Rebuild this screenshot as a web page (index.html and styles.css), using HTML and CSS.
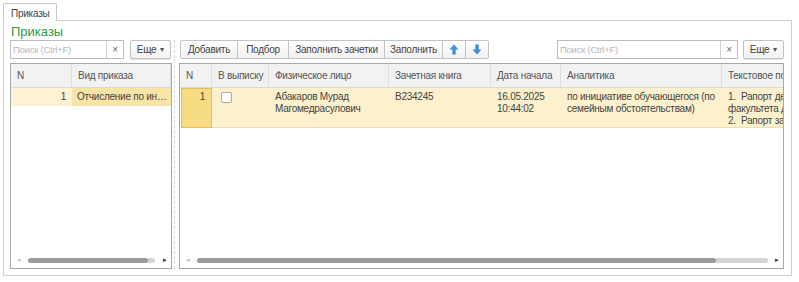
FILE: index.html
```html
<!DOCTYPE html>
<html lang="ru">
<head>
<meta charset="utf-8">
<title>Приказы</title>
<link rel="stylesheet" href="styles.css">
</head>
<body>
<div class="tabs"><div class="tab">Приказы</div></div>
<div class="panel">
  <div class="title">Приказы</div>
  <div class="content">
    <div class="pane pane-left">
      <div class="toolbar">
        <div class="search search-left"><span class="ph">Поиск (Ctrl+F)</span><span class="clear">×</span></div>
        <div class="btn more">Еще <span class="caret">▾</span></div>
      </div>
      <div class="table">
        <div class="grid grid-left">
          <div class="th">N</div><div class="th">Вид приказа</div>
          <div class="td num row1">1</div><div class="td cur row1 ell">Отчисление по инициативе обучающегося</div>
        </div>
        <div class="spacer"></div>
        <div class="hscroll">
          <span class="arr">◂</span>
          <div class="track"><div class="thumb" style="width:120px"></div><div class="rest" style="width:7px"></div></div>
          <span class="arr dark">▸</span>
        </div>
      </div>
    </div>
    <div class="split"></div>
    <div class="pane pane-right">
      <div class="toolbar">
        <div class="btngroup">
          <div class="btn g">Добавить</div><div class="btn g">Подбор</div><div class="btn g">Заполнить зачетки</div><div class="btn g">Заполнить</div>
          <div class="btn g icon"><svg width="10" height="11" viewBox="0 0 10 11"><path d="M5 0.5 L9.5 5.5 H6.7 V10.5 H3.3 V5.5 H0.5 Z" fill="#3f8fd8"/></svg></div>
          <div class="btn g icon"><svg width="10" height="11" viewBox="0 0 10 11"><path d="M5 10.5 L9.5 5.5 H6.7 V0.5 H3.3 V5.5 H0.5 Z" fill="#3f8fd8"/></svg></div>
        </div>
        <div class="grow"></div>
        <div class="search search-right"><span class="ph">Поиск (Ctrl+F)</span><span class="clear">×</span></div>
        <div class="btn more">Еще <span class="caret">▾</span></div>
      </div>
      <div class="table">
        <div class="grid grid-right">
          <div class="th">N</div><div class="th">В выписку</div><div class="th">Физическое лицо</div><div class="th">Зачетная книга</div><div class="th">Дата начала</div><div class="th">Аналитика</div><div class="th nowrap">Текстовое поле</div>
          <div class="td num sel">1</div>
          <div class="td row2"><span class="check"></span></div>
          <div class="td row2">Абакаров Мурад Магомедрасулович</div>
          <div class="td row2">В234245</div>
          <div class="td row2">16.05.2025<br>10:44:02</div>
          <div class="td row2">по инициативе обучающегося (по семейным обстоятельствам)</div>
          <div class="td row2 nowrap">1.&nbsp; Рапорт декана<br>факультета д...<br>2.&nbsp; Рапорт заместителя</div>
        </div>
        <div class="spacer"></div>
        <div class="hscroll">
          <span class="arr">◂</span>
          <div class="track"><div class="thumb" style="width:519px"></div><div class="rest" style="width:52px"></div></div>
          <span class="arr dark">▸</span>
        </div>
      </div>
    </div>
  </div>
</div>
</body>
</html>
```
FILE: styles.css
```css
* { box-sizing: border-box; }
html, body { margin: 0; padding: 0; background: #fff; }
body {
  font-family: "Liberation Sans", Arial, sans-serif;
  font-size: 10px;
  letter-spacing: -0.25px;
  color: #4a4a4a;
  width: 799px;
  height: 282px;
  overflow: hidden;
}
.tabs { padding: 3px 0 0 3px; height: 21px; display: flex; }
.tab {
  height: 18px;
  border: 1px solid #c8c8c8;
  border-bottom: none;
  border-radius: 2px 2px 0 0;
  padding: 4px 7px 0 7px;
  background: #fff;
  position: relative;
  z-index: 1;
  color: #444;
}
.panel {
  margin: -1px 0 0 3px;
  width: 789px;
  height: 256px;
  border: 1px solid #cfcfcf;
  padding: 3px 7px 6px 6px;
  display: flex;
  flex-direction: column;
}
.title {
  color: #2f9a45;
  font-size: 13px;
  letter-spacing: 0;
  height: 16px;
  line-height: 16px;
  padding-left: 1px;
}
.content { flex: 1; display: flex; min-height: 0; }
.pane { display: flex; flex-direction: column; min-width: 0; }
.pane-left { width: 162px; }
.pane-right { flex: 1; }
.split {
  width: 7px;
  display: flex;
  justify-content: center;
  padding-left: 1px;
}
.split::before {
  content: "";
  display: block;
  border-left: 1px dashed #d6d6d6;
  height: 100%;
  margin-right: 3px;
}
.toolbar { display: flex; height: 19px; margin-bottom: 4px; align-items: stretch; }
.grow { flex: 1; }
.search {
  display: flex;
  border: 1px solid #bdbdbd;
  background: #fff;
  align-items: center;
}
.search-left { width: 114px; }
.search-right { width: 181px; margin-right: 5px; }
.ph { flex: 1; color: #b9b9b9; padding-left: 2px; font-size: 9.5px; white-space: nowrap; overflow: hidden; }
.clear {
  width: 17px;
  height: 100%;
  border-left: 1px solid #d3d3d3;
  display: flex;
  align-items: center;
  justify-content: center;
  color: #666;
  font-size: 10px;
}
.btn {
  display: flex;
  align-items: center;
  justify-content: center;
  border: 1px solid #c3c3c3;
  border-radius: 2px;
  background: linear-gradient(#ffffff, #f1f1f1);
  color: #444;
  white-space: nowrap;
}
.more { width: 41px; margin-left: 6px; box-shadow: 0 1px 1px rgba(0,0,0,0.12); }
.pane-right .more { margin-left: 0; }
.caret { font-size: 8px; margin-left: 4px; color: #555; }
.btngroup { display: flex; margin-left: 1px; }
.btn.g { border-radius: 0; padding: 0; margin-left: -1px; }
.btn.g:first-child { margin-left: 0; border-radius: 2px 0 0 2px; }
.btn.g:last-child { border-radius: 0 2px 2px 0; }
.btn.g:nth-child(1) { width: 58px; }
.btn.g:nth-child(2) { width: 52px; }
.btn.g:nth-child(3) { width: 97px; }
.btn.g:nth-child(4) { width: 59px; }
.btn.icon { width: 24px; padding: 0; }
.table {
  flex: 1;
  border: 1px solid #a8a8a8;
  display: flex;
  flex-direction: column;
  overflow: hidden;
  background: #fff;
}
.grid { display: grid; }
.grid-left { grid-template-columns: 61px 99px; grid-template-rows: 24px 18px; }
.grid-right { grid-template-columns: 32px 57px 120px 102px 70px 161px 160px; grid-template-rows: 24px 40px; }
.th {
  background: #f2f2f2;
  border-bottom: 1px solid #d9d9d9;
  border-right: 1px solid #dedede;
  padding: 0 6px;
  line-height: 23px;
  white-space: nowrap;
  overflow: hidden;
  color: #555;
}
.td { padding: 3px 5px 0 6px; line-height: 12px; overflow: hidden; color: #444; }
.td.num { text-align: right; padding-right: 6px; }
.grid-left .td { line-height: 14px; padding-top: 2px; }
.row1.num { background: #fdf3d2; }
.row1.cur { background: #f8e5a6; padding-left: 5px; padding-right: 1px; }
.ell { white-space: nowrap; text-overflow: ellipsis; }
.sel { background: #f8dc84; border: 1px solid #e5bf56; margin-left: 1px; padding-top: 2px; }
.row2 { background: #fcf1cc; border-bottom: 1px solid #ecdfb2; }
.check {
  display: block;
  width: 11px;
  height: 11px;
  border: 1px solid #a9a9a9;
  border-radius: 2px;
  background: #fff;
  margin: 1px 0 0 3px;
}
.nowrap { white-space: nowrap; }
.spacer { flex: 1; }
.hscroll {
  height: 12px;
  display: flex;
  align-items: center;
  padding: 0 4px 4px 6px;
}
.arr { font-size: 7px; color: #c4c4c4; width: 10px; }
.arr.dark { color: #333; text-align: right; }
.track { flex: 1; display: flex; margin-left: 1px; }
.thumb { height: 5px; background: #999; border-radius: 3px; }
.rest { height: 5px; background: #d5d5d5; border-radius: 0 3px 3px 0; }
```
